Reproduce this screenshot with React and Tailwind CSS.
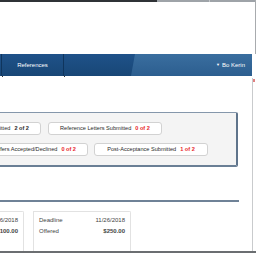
export default function App() {
  const font = { fontFamily: '"Liberation Sans", Arial, sans-serif' };
  return (
    <div className="relative w-[256px] h-[253px] overflow-hidden bg-white" style={font}>
      {/* top strip */}
      <div className="flex h-[2px]">
        <div className="w-[157px] bg-[#2f3236]" />
        <div className="w-[52px] bg-[#9ea3a8]" />
        <div className="w-[1px] bg-[#c4c7ca]" />
        <div className="flex-1 bg-[#9ea3a8]" />
      </div>
      <div className="absolute right-0 top-0 h-[54px] w-[1px] bg-[#a8abae]" />

      <div className="h-[52px]" />

      {/* nav bar */}
      <div className="relative flex h-[22px] w-[252px] items-center overflow-hidden bg-gradient-to-b from-[#1f5289] to-[#184776] text-[6px] text-white">
        <div className="absolute inset-y-0 left-[131px] right-0 bg-gradient-to-b from-[#3a6e9f] to-[#2c5e8f] [clip-path:polygon(4px_0,100%_0,100%_100%,0_100%)]" />
        <div className="h-full w-[2px] border-r border-[#0f355d]" />
        <div className="relative flex h-full w-[62px] items-center justify-center border-r border-[#0f355d]">
          References
        </div>
        <div className="relative ml-auto mr-[7px] flex items-center gap-[2px]">
          <span className="text-[4px]">▼</span>
          <span>Bo Kerin</span>
        </div>
      </div>
      <div className="relative h-[1px] w-[252px]">
        <div className="absolute left-[2px] top-0 h-[1px] w-[1px] bg-[#333]" />
        <div className="absolute left-[64px] top-0 h-[1px] w-[1px] bg-[#333]" />
      </div>

      {/* right rail */}
      <div className="absolute right-[3px] top-[78px] h-[173px] w-[1px] bg-[#c9cbcd]" />
      <div className="absolute right-[1px] top-[79px] h-[3px] w-[2px] bg-[#e08080]" />

      <div className="h-[35px]" />

      {/* status box */}
      <div className="ml-[-60px] w-[298px] h-[55px] rounded-[2px] border border-[#8597ab] border-r-2 border-b-2 border-r-[#5f748b] border-b-[#6a7f95] bg-[#f4f4f4] pt-[9px] text-[5.6px] text-[#2a2a2a]">
        <div className="flex gap-[7px]">
          <div className="flex h-[13px] w-[100px] items-center justify-end gap-[4px] rounded-[3px] border border-[#d2d2d2] bg-white pr-[11px]">
            <span className="whitespace-nowrap">Applications Submitted</span>
            <span className="shrink-0 whitespace-nowrap font-bold">2 of 2</span>
          </div>
          <div className="flex h-[13px] w-[114px] items-center justify-center gap-[4px] rounded-[3px] border border-[#d2d2d2] bg-white">
            <span className="whitespace-nowrap">Reference Letters Submitted</span>
            <span className="shrink-0 whitespace-nowrap font-bold text-[#e8262c]">0 of 2</span>
          </div>
        </div>
        <div className="mt-[8px] flex gap-[6px]">
          <div className="flex h-[13px] w-[147px] items-center justify-end gap-[4px] rounded-[3px] border border-[#d2d2d2] bg-white pr-[11px]">
            <span className="whitespace-nowrap">Offers Accepted/Declined</span>
            <span className="shrink-0 whitespace-nowrap font-bold text-[#e8262c]">0 of 2</span>
          </div>
          <div className="flex h-[13px] w-[114px] items-center justify-center gap-[4px] rounded-[3px] border border-[#d2d2d2] bg-white">
            <span className="whitespace-nowrap">Post-Acceptance Submitted</span>
            <span className="shrink-0 whitespace-nowrap font-bold text-[#e8262c]">1 of 2</span>
          </div>
        </div>
      </div>

      <div className="h-[33px]" />
      <div className="h-[2px] w-[239px] bg-[#6f8297]" />
      <div className="h-[9px]" />

      {/* cards */}
      <div className="ml-[-65px] flex h-[41px] gap-[9px] text-[6px] text-[#444]">
        <div className="w-[89px] rounded-tr-[2px] border border-b-0 border-[#e2e2e2] px-[5px] pt-[4px]">
          <div className="flex justify-between">
            <span>Deadline</span>
            <span>11/16/2018</span>
          </div>
          <div className="mt-[2px] flex justify-between">
            <span>Offered</span>
            <span className="font-bold">$100.00</span>
          </div>
        </div>
        <div className="w-[98px] rounded-tr-[2px] border border-b-0 border-[#e2e2e2] px-[5px] pt-[4px]">
          <div className="flex justify-between">
            <span>Deadline</span>
            <span>11/26/2018</span>
          </div>
          <div className="mt-[2px] flex justify-between">
            <span>Offered</span>
            <span className="font-bold">$250.00</span>
          </div>
        </div>
      </div>

      <div className="absolute bottom-0 left-0 h-[2px] w-full bg-[#6b6e71]" />
    </div>
  );
}
